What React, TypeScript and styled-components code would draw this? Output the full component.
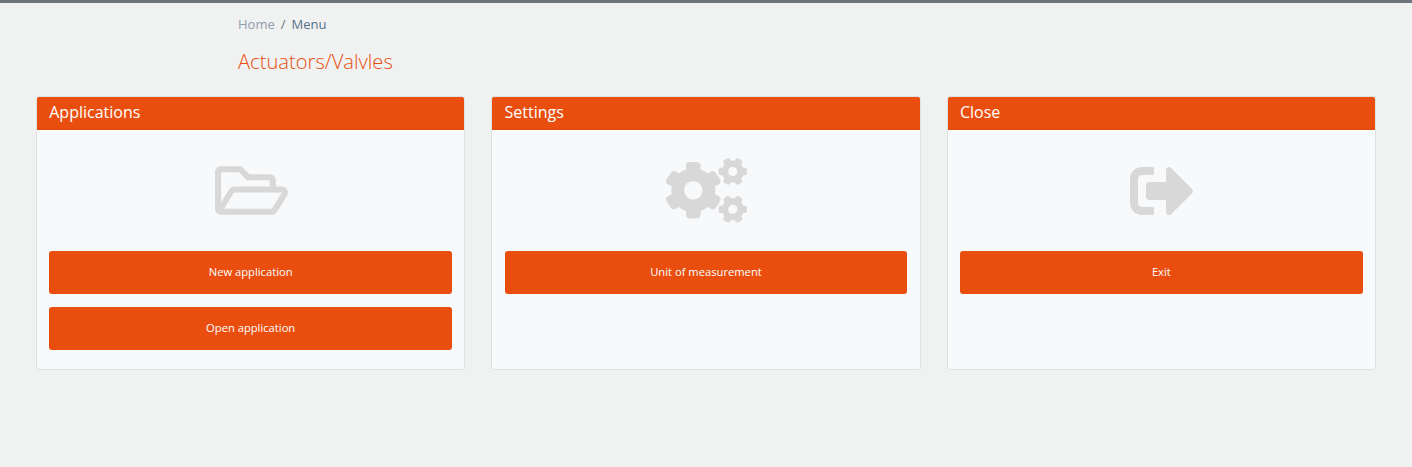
import React from "react";
import styled, { createGlobalStyle } from "styled-components";
import { FaRegFolderOpen, FaCogs, FaSignOutAlt } from "react-icons/fa";

const Global = createGlobalStyle`
  html, body { margin: 0; padding: 0; height: 100%; background: #f0f2f1; }
  body { font-family: "Open Sans", "Liberation Sans", sans-serif; }
`;
const Page = styled.div`
  min-height: 467px;
  box-sizing: border-box;
  border-top: 3px solid #6c757d;
  background: #f0f2f1;
`;
const Head = styled.header`
  padding: 12px 0 0 238px;
`;
const Crumbs = styled.nav`
  display: flex;
  align-items: center;
  height: 18px;
  font-size: 13px;
  line-height: 18px;
`;
const Crumb = styled.span<{ $active?: boolean }>`
  color: ${(p) => (p.$active ? "#56708a" : "#8f9cad")};
`;
const Sep = styled.span`
  color: #6c757d;
  padding: 0 6px;
`;
const Title = styled.h1`
  margin: 15px 0 0;
  height: 30px;
  font-size: 20.16px;
  line-height: 26px;
  font-weight: 300;
  color: #e94e0f;
`;
const Grid = styled.main`
  display: grid;
  grid-template-columns: repeat(3, 1fr);
  column-gap: 26px;
  padding: 18px 36px 0;
`;
const Card = styled.section`
  box-sizing: border-box;
  height: 274px;
  background: #f8f9fb;
  border: 1px solid #dee2e2;
  border-radius: 3px;
  overflow: hidden;
`;
const CardHead = styled.h2`
  margin: 0;
  height: 33px;
  box-sizing: border-box;
  padding: 0 12.25px;
  background: #e94e0f;
  border-bottom: 1px solid #d84a10;
  color: #fff;
  font-size: 16px;
  font-weight: 400;
  line-height: 30px;
`;
const CardBody = styled.div`
  display: flex;
  flex-direction: column;
  padding: 0 12.25px;
`;
const IconSlot = styled.div`
  height: 121px;
  display: flex;
  align-items: center;
  justify-content: center;
  color: #d8d8d8;
  padding-left: 1px;
`;
const Action = styled.button`
  height: 43px;
  margin-bottom: 13px;
  border: none;
  border-radius: 3px;
  background: #e94e0f;
  color: #fff;
  font-family: inherit;
  font-size: 11.2px;
  padding: 0 0 2px;
`;

const cards = [
  { title: "Applications", icon: <FaRegFolderOpen size={73} />, actions: ["New application", "Open application"] },
  { title: "Settings", icon: <FaCogs size={81} />, actions: ["Unit of measurement"] },
  { title: "Close", icon: <FaSignOutAlt size={64} />, actions: ["Exit"] },
];

export default function App() {
  return (
    <Page>
      <Global />
      <Head>
        <Crumbs>
          <Crumb>Home</Crumb>
          <Sep>/</Sep>
          <Crumb $active>Menu</Crumb>
        </Crumbs>
        <Title>Actuators/Valvles</Title>
      </Head>
      <Grid>
        {cards.map((c) => (
          <Card key={c.title}>
            <CardHead>{c.title}</CardHead>
            <CardBody>
              <IconSlot>{c.icon}</IconSlot>
              {c.actions.map((a) => (
                <Action key={a}>{a}</Action>
              ))}
            </CardBody>
          </Card>
        ))}
      </Grid>
    </Page>
  );
}
